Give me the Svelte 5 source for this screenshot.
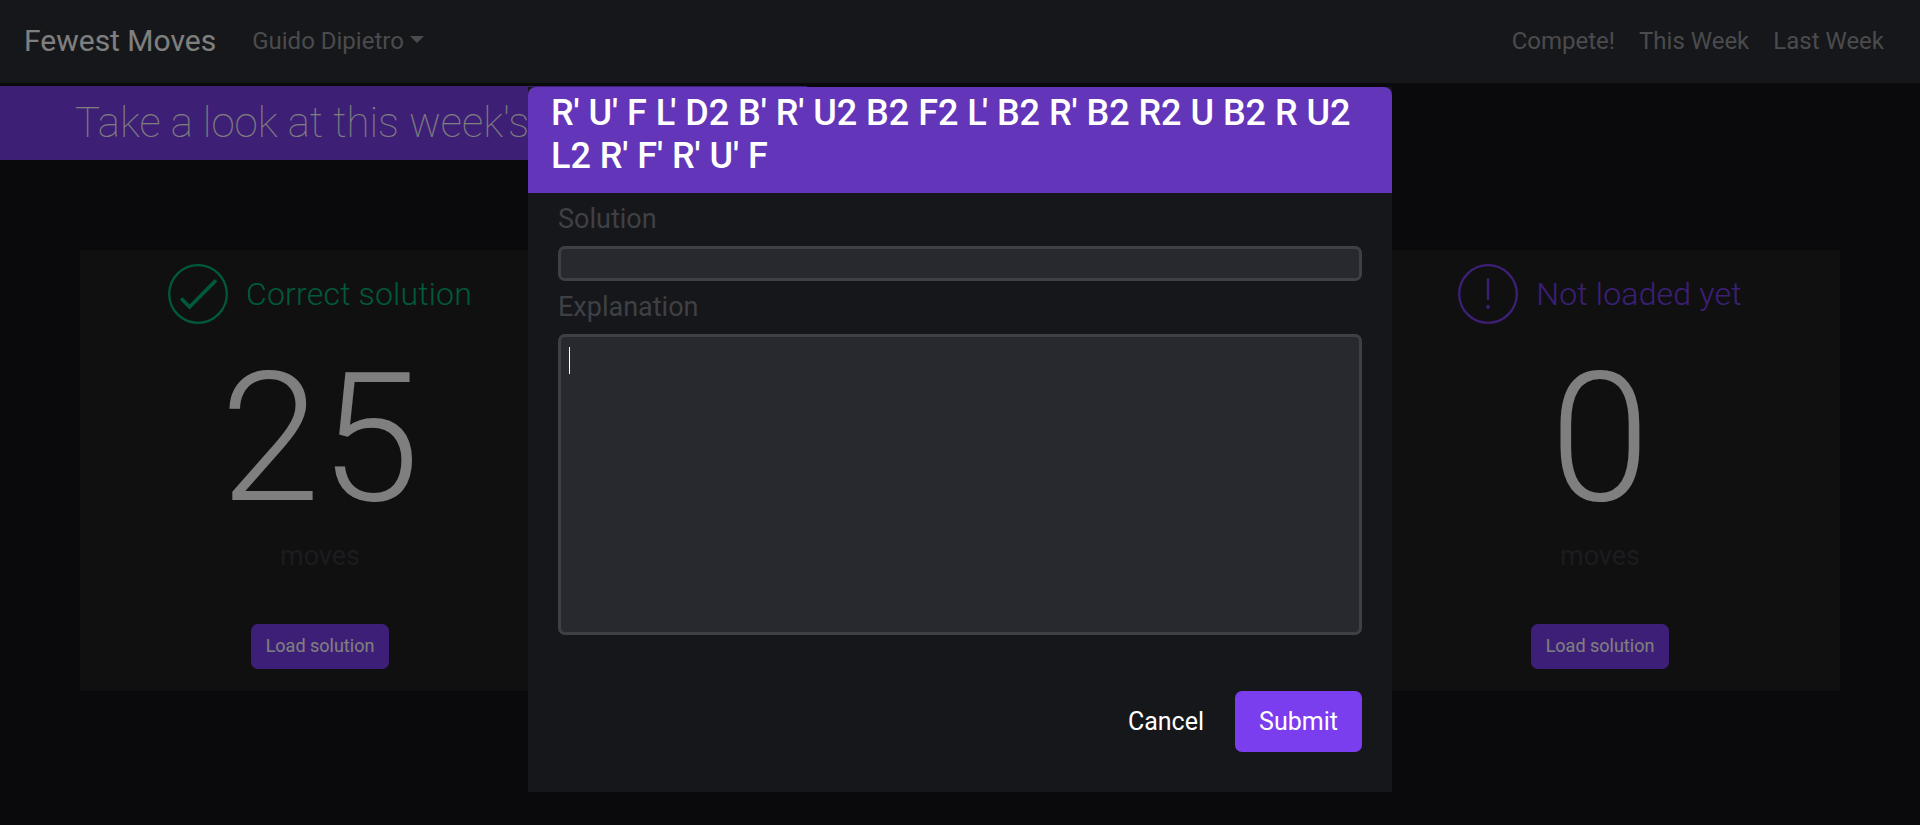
<script>
  const links = ['Compete!', 'This Week', 'Last Week'];
  const cards = [
    { state: 'correct', label: 'Correct solution', moves: 25 },
    { state: 'pending', label: 'Not loaded yet', moves: 0 },
  ];
  const scramble = "R' U' F L' D2 B' R' U2 B2 F2 L' B2 R' B2 R2 U B2 R U2 L2 R' F' R' U' F".split(' ');
</script>

<div class="page">
  <nav>
    <a class="brand">Fewest Moves</a>
    <a class="user">Guido Dipietro<span class="caret"></span></a>
    <div class="links">
      {#each links as link}<a>{link}</a>{/each}
    </div>
  </nav>

  <div class="banner">Take a look at this week's</div>

  <main>
    {#each cards as card}
      <section>
        <div class="status {card.state}">
          <svg viewBox="0 0 60 60" width="60" height="60" fill="none" stroke="currentColor">
            <circle cx="30" cy="30" r="28.8" stroke-width="2.3" />
            {#if card.state === 'correct'}
              <path d="M13.2 35.4 L21.6 44 L48 17.2" stroke-width="3.6" transform="translate(0 -1)" />
            {:else}
              <path d="M30 15.5 V35" stroke-width="2.4" stroke-linecap="round" />
              <circle cx="30" cy="43" r="1.9" fill="currentColor" stroke="none" />
            {/if}
          </svg>
          <span>{card.label}</span>
        </div>
        <div class="count">{card.moves}</div>
        <div class="unit">moves</div>
        <button class="load">Load solution</button>
      </section>
    {/each}
  </main>
</div>

<div class="overlay">
  <div class="modal">
    <header>
      {#each scramble as move}
        <span class="move" class:kern={move === "L'"}>{move}</span>{' '}
      {/each}
    </header>
    <div class="label">Solution</div>
    <div class="field single"></div>
    <div class="label">Explanation</div>
    <div class="field multi"><span class="cursor"></span></div>
    <footer>
      <button class="cancel">Cancel</button>
      <button class="submit">Submit</button>
    </footer>
  </div>
</div>

<style>
  :global(body) {
    margin: 0;
    background: #141418;
    overflow: hidden;
  }
  .page, .overlay {
    font-family: Roboto, sans-serif;
    box-sizing: border-box;
  }
  .page {
    height: 825px;
    color: #fff;
  }
  nav {
    display: flex;
    align-items: center;
    height: 83px;
    padding: 0 36px 2px 24px;
    box-sizing: border-box;
    background: #2c2e34;
    font-size: 24px;
    white-space: nowrap;
  }
  nav a { color: #959699; }
  nav .brand {
    color: #fff;
    font-size: 30px;
    margin-right: 36px;
  }
  .caret {
    display: inline-block;
    margin-left: 6px;
    vertical-align: 6px;
    border-top: 7px solid;
    border-left: 7px solid transparent;
    border-right: 7px solid transparent;
  }
  .links {
    display: flex;
    gap: 24px;
    margin-left: auto;
  }
  .banner {
    width: 807px;
    height: 74px;
    margin-top: 3px;
    padding-left: 75px;
    box-sizing: border-box;
    background: #7a3eec;
    font-size: 42px;
    font-weight: 100;
    line-height: 74px;
  }
  main {
    display: flex;
    justify-content: space-between;
    height: 441px;
    margin: 90px 80px 0;
    background: #202022;
  }
  section {
    display: flex;
    flex-direction: column;
    align-items: center;
    width: 480px;
    padding-top: 14px;
    box-sizing: border-box;
  }
  .status {
    display: flex;
    align-items: center;
    gap: 18px;
    font-size: 32px;
    font-weight: 300;
    line-height: 60px;
    letter-spacing: 0.18px;
  }
  .correct { color: #00b474; }
  .pending { color: #7a3eec; }
  .count {
    margin-top: 9px;
    font-size: 180px;
    font-weight: 300;
    line-height: 211px;
  }
  .unit {
    margin-top: -9px;
    font-size: 27px;
    font-weight: 400;
    line-height: 42px;
    color: #36383e;
  }
  button {
    border: 0;
    padding: 0;
    border-radius: 7px;
    font-family: inherit;
    color: #fff;
    background: #7b3eee;
  }
  .load {
    width: 138px;
    height: 45px;
    margin-top: 47px;
    padding-bottom: 2px;
    font-size: 18px;
  }
  .overlay {
    position: fixed;
    inset: 0;
    padding-top: 87px;
    background: rgba(0, 0, 0, 0.5);
  }
  .modal {
    width: 864px;
    height: 705px;
    margin: 0 auto;
    background: #16171b;
  }
  header {
    height: 106px;
    padding: 5px 24px 0 23px;
    box-sizing: border-box;
    border-radius: 8px 8px 0 0;
    background: #6235b9;
    color: #fff;
    font-size: 36px;
    font-weight: 500;
    line-height: 43px;
    letter-spacing: -0.04px;
  }
  .move { display: inline-block; }
  .kern {
    margin-right: 4.8px;
    letter-spacing: -4.8px;
  }
  .label {
    height: 53px;
    padding: 0 30px;
    font-size: 27px;
    font-weight: 400;
    line-height: 52px;
    color: #3e4045;
  }
  .field {
    margin: 0 30px;
    box-sizing: border-box;
    border: 3px solid #3e4045;
    border-radius: 7px;
    background: #28292e;
  }
  .single { height: 35px; }
  .multi {
    height: 301px;
    padding: 10px 8px;
  }
  .cursor {
    display: block;
    width: 1px;
    height: 27px;
    background: #fff;
  }
  footer {
    display: flex;
    justify-content: flex-end;
    gap: 31px;
    padding: 56px 30px 0;
  }
  footer button { font-size: 25px; }
  .cancel { background: none; }
  .submit {
    width: 127px;
    height: 61px;
  }
</style>
